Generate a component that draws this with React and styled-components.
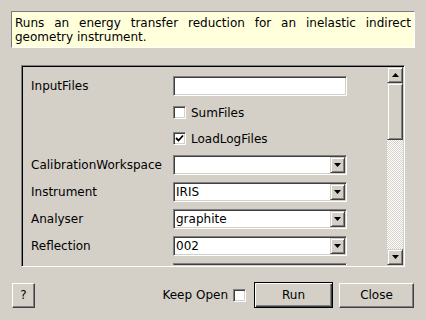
import React from 'react'
import styled, { createGlobalStyle } from 'styled-components'

const face = '#d4d0c8'

const Global = createGlobalStyle`
  html, body {
    margin: 0;
    padding: 0;
    background: ${face};
  }
  body {
    font-family: "DejaVu Sans", Verdana, sans-serif;
    font-size: 12px;
    color: #000;
  }
`

const Dialog = styled.div`
  width: 426px;
  height: 320px;
  box-sizing: border-box;
  padding: 11px 11px 0 11px;
  display: flex;
  flex-direction: column;
  background: ${face};
`

const Description = styled.div`
  height: 37px;
  box-sizing: border-box;
  padding: 4px 3px 0 3px;
  line-height: 14px;
  text-align: justify;
  background: #ffffdc;
  border: 1px solid;
  border-color: #7a7a7a #ffffff #ffffff #7a7a7a;
`

const Frame = styled.div`
  margin: 17px 10px 0 10px;
  height: 202px;
  box-sizing: border-box;
  display: flex;
  border: 1px solid;
  border-color: #808080 #ffffff #ffffff #808080;
  box-shadow: inset 1px 1px 0 #000, inset -1px -1px 0 ${face};
  padding: 1px;
  overflow: hidden;
`

const Viewport = styled.div`
  flex: 1;
  overflow: hidden;
  padding: 9px 0 0 8px;
`

const Grid = styled.div`
  display: grid;
  grid-template-columns: 142px 174px;
  grid-template-rows: 20px 19px 19px;
  grid-auto-rows: 20px;
  row-gap: 7px;
  align-items: center;
`

const Label = styled.div`
  white-space: nowrap;
`

const Sunken = styled.div`
  box-sizing: border-box;
  height: 20px;
  width: 174px;
  background: #fff;
  border: 1px solid;
  border-color: #808080 #ffffff #ffffff #808080;
  box-shadow: inset 1px 1px 0 #404040, inset -1px -1px 0 ${face};
  display: flex;
  align-items: center;
`

const ComboText = styled.span`
  flex: 1;
  padding-left: 2px;
`

const DropButton = styled.div`
  width: 15px;
  height: 16px;
  margin-right: 1px;
  box-sizing: border-box;
  background: ${face};
  border: 1px solid;
  border-color: ${face} #404040 #404040 ${face};
  box-shadow: inset 1px 1px 0 #fff, inset -1px -1px 0 #808080;
  display: flex;
  align-items: center;
  justify-content: center;
`

const CheckRow = styled.label`
  display: flex;
  align-items: center;
  gap: 5px;
`

const Box = styled.span`
  width: 13px;
  height: 13px;
  box-sizing: border-box;
  background: #fff;
  border: 1px solid;
  border-color: #808080 #ffffff #ffffff #808080;
  box-shadow: inset 1px 1px 0 #404040, inset -1px -1px 0 ${face};
  display: flex;
  align-items: center;
  justify-content: center;
`

const Scrollbar = styled.div`
  width: 16px;
  display: flex;
  flex-direction: column;
  background-color: ${face};
  background-image: conic-gradient(#fff 25%, ${face} 0 50%, #fff 0 75%, ${face} 0);
  background-size: 2px 2px;
`

const Raised = styled.div`
  box-sizing: border-box;
  width: 16px;
  height: ${p => p.$h}px;
  flex: none;
  background: ${face};
  border: 1px solid;
  border-color: ${face} #404040 #404040 ${face};
  box-shadow: inset 1px 1px 0 #fff, inset -1px -1px 0 #808080;
  display: flex;
  align-items: center;
  justify-content: center;
`

const Track = styled.div`
  flex: 1;
`

const Footer = styled.div`
  margin-top: 15px;
  padding: 0 1px;
  display: flex;
  align-items: center;
  height: 26px;
`

const Button = styled.button`
  font: inherit;
  color: #000;
  box-sizing: border-box;
  width: ${p => p.$w}px;
  height: ${p => (p.$default ? 26 : 25)}px;
  margin-left: ${p => p.$gap || 0}px;
  padding: 0;
  background: ${face};
  border: 1px solid;
  border-color: ${p => (p.$default ? '#000' : '#fff #404040 #404040 #fff')};
  box-shadow: ${p => (p.$default
    ? 'inset 1px 1px 0 #fff, inset -1px -1px 0 #404040, inset -2px -2px 0 #808080'
    : 'inset -1px -1px 0 #808080')};
`

const Spacer = styled.div`
  flex: 1;
`

const KeepOpen = styled.label`
  display: flex;
  align-items: center;
  gap: 5px;
  margin-right: 2px;
`

const Arrow = ({ up }) => (
  <svg width="7" height="4" viewBox="0 0 7 4">
    <polygon points={up ? '3.5,0 7,4 0,4' : '0,0 7,0 3.5,4'} fill="#000" />
  </svg>
)

const Check = () => (
  <svg width="9" height="9" viewBox="0 0 9 9">
    <polyline points="1,4 3.5,6.5 8,1.5" fill="none" stroke="#000" strokeWidth="1.8" />
  </svg>
)

const Combo = ({ value }) => (
  <Sunken>
    <ComboText>{value}</ComboText>
    <DropButton><Arrow /></DropButton>
  </Sunken>
)

const CheckBox = ({ checked }) => <Box>{checked && <Check />}</Box>

// last row sits just under the fold: only its field's top edge shows
const rows = [
  { label: 'InputFiles', kind: 'text' },
  { label: '', kind: 'check', text: 'SumFiles' },
  { label: '', kind: 'check', text: 'LoadLogFiles', checked: true },
  { label: 'CalibrationWorkspace', kind: 'combo', value: '' },
  { label: 'Instrument', kind: 'combo', value: 'IRIS' },
  { label: 'Analyser', kind: 'combo', value: 'graphite' },
  { label: 'Reflection', kind: 'combo', value: '002' },
  { label: '', kind: 'combo', value: '' },
]

const App = () => (
  <Dialog>
    <Global />
    <Description>
      Runs an energy transfer reduction for an inelastic indirect geometry instrument.
    </Description>
    <Frame>
      <Viewport>
        <Grid>
          {rows.map((r, i) => (
            <React.Fragment key={i}>
              <Label>{r.label}</Label>
              {r.kind === 'text' && <Sunken />}
              {r.kind === 'combo' && <Combo value={r.value} />}
              {r.kind === 'check' && (
                <CheckRow>
                  <CheckBox checked={r.checked} />
                  {r.text}
                </CheckRow>
              )}
            </React.Fragment>
          ))}
        </Grid>
      </Viewport>
      <Scrollbar>
        <Raised $h={16}><Arrow up /></Raised>
        <Raised $h={57} />
        <Track />
        <Raised $h={16}><Arrow /></Raised>
      </Scrollbar>
    </Frame>
    <Footer>
      <Button $w={23}>?</Button>
      <Spacer />
      <KeepOpen>
        Keep Open
        <CheckBox />
      </KeepOpen>
      <Button $w={79} $gap={6} $default>Run</Button>
      <Button $w={75} $gap={6}>Close</Button>
    </Footer>
  </Dialog>
)

export default App
